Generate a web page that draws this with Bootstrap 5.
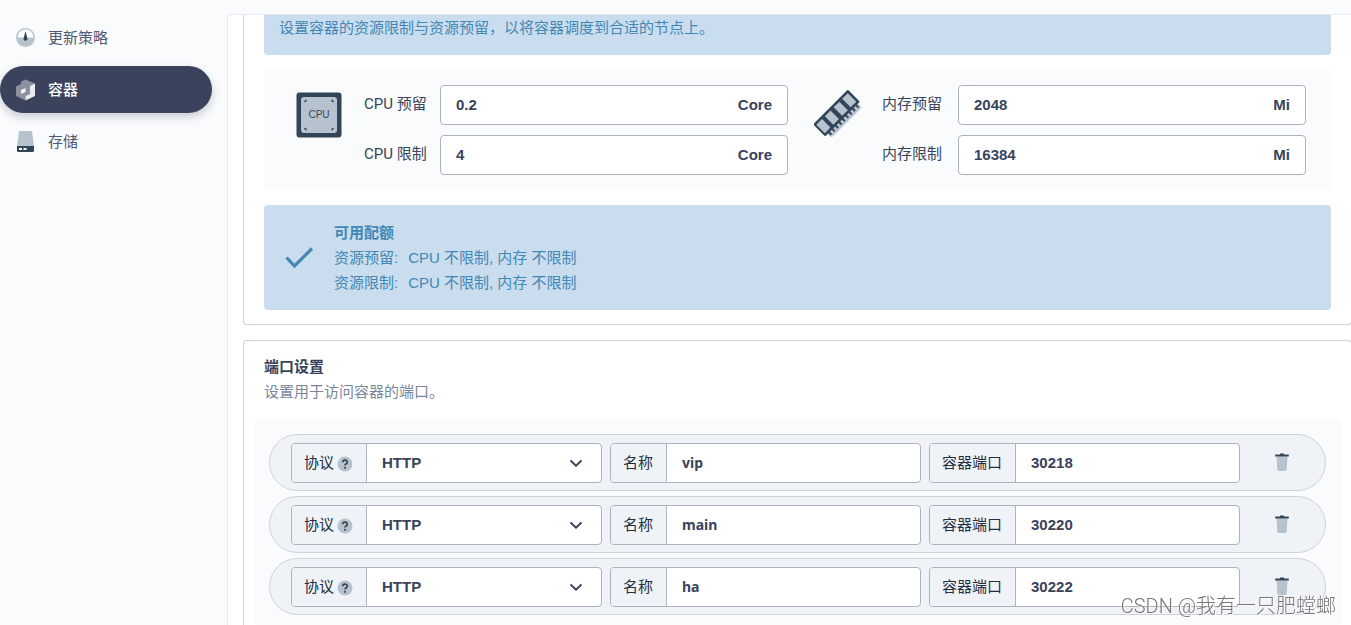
<!DOCTYPE html>
<html lang="zh-CN">
<head>
<meta charset="utf-8">
<meta name="viewport" content="width=device-width, initial-scale=1">
<title>容器设置</title>
<link href="https://cdn.jsdelivr.net/npm/bootstrap@5.3.0/dist/css/bootstrap.min.css" rel="stylesheet">
<style>
  :root {
    --ink: #39435c;
    --line: #abb4be;
    --card-line: #ccd3db;
    --pale: #f9fbfd;
    --tint: #eff3f8;
    --info-bg: #c9ddee;
    --info: #4387b5;
  }
  body {
    font-family: "Liberation Sans", "Noto Sans CJK SC", sans-serif;
    font-size: 15px;
    line-height: 25px;
    color: var(--ink);
    background: var(--pale);
  }
  .shell { height: 100vh; padding-top: 14px; }
  .side { width: 227px; padding-right: 15px; gap: 5px; }
  .side .nav-link {
    height: 47px;
    padding: 0 16px;
    gap: 12px;
    color: #4d5a75;
    border-radius: 24px;
  }
  .side .nav-link svg { width: 20px; height: 22px; }
  .side .nav-link.active {
    background: #3a435b;
    color: #fff;
    font-weight: 500;
    box-shadow: 0 4px 8px rgba(54, 67, 92, .25);
  }
  .pane {
    background: #fff;
    border: solid #e3e9ef;
    border-width: 1px 0 0 1px;
    border-radius: 4px 0 0 0;
    padding-left: 15px;
    gap: 15px;
    overflow-x: hidden;
    overflow-y: auto;
  }
  .box {
    border: 1px solid var(--card-line);
    border-radius: 4px;
    padding: 0 20px;
    margin-right: -1px;
  }
  .box-upper { border-top: 0; border-top-left-radius: 0; border-top-right-radius: 0; padding-bottom: 14px; gap: 15px; }
  .box-lower { border-bottom: 0; border-bottom-left-radius: 0; border-bottom-right-radius: 0; padding-top: 13px; }
  .info { background: var(--info-bg); color: var(--info); border-radius: 4px; }
  .info-intro { border-top-left-radius: 0; border-top-right-radius: 0; padding: 0 15px 15px; }
  .info-quota { padding: 15px 20px; gap: 20px; }
  .info-quota svg { width: 30px; height: 30px; }
  .info-quota dl { grid-template-columns: auto 1fr; column-gap: 10px; }
  .limits { background: var(--pale); border-radius: 4px; padding: 15px 25px 15px 32px; gap: 26px; }
  .limit-half { flex: 1 1 0; min-width: 0; gap: 20px; }
  .limit-half > svg { width: 48px; height: 60px; }
  .limit-rows { gap: 10px; }
  .limit-rows label { width: 76px; line-height: 38px; height: 40px; font-family: Roboto, "Noto Sans CJK SC", sans-serif; }
  .field {
    height: 40px;
    background: #fff;
    border: 1px solid var(--line);
    border-radius: 4px;
    font-weight: 700;
  }
  .field input, .field select {
    min-width: 0;
    border: 0;
    outline: 0;
    padding: 0 15px 2px;
    background: transparent;
    color: var(--ink);
    font-weight: 700;
    appearance: none;
  }
  .field:focus-within { border-color: #55bc8a; }
  .unit { padding: 0 15px 2px 0; }
  .hint { color: #79879c; }
  .ports { background: var(--pale); border-radius: 4px; margin: 15px -10px 0; padding: 15px; gap: 5px; }
  .port { background: var(--tint); border: 1px solid var(--card-line); border-radius: 29px; padding: 8px 0 7px 21px; }
  .port-fields { gap: 8px; }
  .port .field { flex: 1 1 0; min-width: 0; }
  .tag {
    background: var(--tint);
    border-right: 1px solid var(--line);
    border-radius: 3px 0 0 3px;
    padding: 0 13px 2px 12px;
    gap: 3px;
    font-weight: 400;
    color: #242e42;
  }
  .tag svg { width: 16px; height: 16px; margin-top: 3px; }
  .name-input { font-family: "Noto Sans", "Noto Sans CJK SC", sans-serif; font-size: 14px; }
  .chevron { right: 18px; width: 14px; height: 14px; pointer-events: none; }
  .trash { width: 85px; border: 0; background: none; padding: 0 2px 6px 0; }
  .trash svg { width: 16px; height: 20px; }
  .signature {
    right: 15px;
    bottom: 4px;
    font: 300 20px/30px Roboto, "Noto Sans CJK SC", sans-serif;
    color: #777;
    text-shadow: 1px 1px 0 #fff;
    pointer-events: none;
  }
</style>
</head>
<body>
<svg class="d-none" aria-hidden="true">
  <symbol id="i-help" viewBox="0 0 16 16">
    <circle cx="8" cy="8" r="7.5" fill="#b6c2cd"/>
    <path d="M5.7 6.3C5.8 3.5 10.3 3.5 10.3 6.2C10.3 7.8 8 7.8 8 9.6" fill="none" stroke="#324558" stroke-width="1.7"/>
    <rect x="7.1" y="10.9" width="1.8" height="1.8" fill="#324558"/>
  </symbol>
  <symbol id="i-trash" viewBox="0 0 16 20">
    <path d="M2.5 4.5h11l-.8 13a1.5 1.5 0 0 1-1.5 1.4H4.8a1.5 1.5 0 0 1-1.5-1.4z" fill="#b6c2cd"/>
    <path d="M1.2 2.500H6V1.500h4v1h4.800v2H1.200z" fill="#324558"/>
  </symbol>
  <symbol id="i-chevron" viewBox="0 0 14 14">
    <path d="M1.5 4.500L7 9.800l5.500-5.300" fill="none" stroke="#36435c" stroke-width="1.900"/>
  </symbol>
</svg>

<div class="shell d-flex">
  <nav class="side nav flex-column flex-nowrap flex-shrink-0" aria-label="设置">
    <a class="nav-link d-flex align-items-center" href="#strategy">
      <svg viewBox="0 0 20 22" aria-hidden="true">
        <circle cx="9.500" cy="10.500" r="9.500" fill="#b6c2cd"/>
        <path d="M1.500 10.500a8 8 0 0 1 16 0z" fill="#fff"/>
        <path d="M9.500 4l1.900 7.200a2 2 0 1 1-3.800 0z" fill="#324558"/>
      </svg>更新策略</a>
    <a class="nav-link active d-flex align-items-center" href="#container" aria-current="page">
      <svg viewBox="0 0 20 22" aria-hidden="true">
        <path d="M9.500 .5L19 4.500 14 7.500v7.500l-4.500 2v4.500L0 17V7.500l5-2.500V2.500z" fill="#fff" opacity=".42"/>
        <path d="M14 7l5-2.500v12.500l-9.500 4.500V17l4.500-2zM5 11l4.500-2v4L5 15z" fill="#fff" opacity=".9"/>
      </svg>容器</a>
    <a class="nav-link d-flex align-items-center" href="#storage">
      <svg viewBox="0 0 20 22" aria-hidden="true">
        <path d="M3 0h13l2 15.500H1z" fill="#b6c2cd"/>
        <path d="M1 15h17v4.500a1.500 1.500 0 0 1-1.500 1.500h-14A1.500 1.500 0 0 1 1 19.500z" fill="#324558"/>
        <path d="M3 17h3v2H3zM7.500 17h3v2h-3z" fill="#fff"/>
      </svg>存储</a>
  </nav>

  <main class="pane d-flex flex-column flex-grow-1">
    <section class="box box-upper d-flex flex-column flex-shrink-0" id="container">
      <div class="info info-intro">设置容器的资源限制与资源预留，以将容器调度到合适的节点上。</div>

      <div class="limits d-flex">
        <div class="limit-half d-flex">
          <svg class="flex-shrink-0" viewBox="0 0 48 60" aria-hidden="true">
            <rect x=".5" y="7.500" width="45" height="45" rx="3" fill="#324558"/>
            <rect x="5" y="12" width="36" height="36" rx="3" fill="#b6c2cd"/>
            <path d="M8.500 17l2-2M37.500 17l-2-2M8.500 43l2 2M37.500 43l-2 2" stroke="#324558" stroke-width="1.500"/>
            <text x="23" y="33" text-anchor="middle" font-family="Liberation Sans, sans-serif" font-size="10" fill="#324558">CPU</text>
          </svg>
          <div class="limit-rows d-flex flex-column flex-grow-1">
            <div class="d-flex">
              <label for="cpu-request">CPU 预留</label>
              <div class="field d-flex align-items-center flex-grow-1"><input class="flex-grow-1" id="cpu-request" type="text" value="0.2"><span class="unit">Core</span></div>
            </div>
            <div class="d-flex">
              <label for="cpu-limit">CPU 限制</label>
              <div class="field d-flex align-items-center flex-grow-1"><input class="flex-grow-1" id="cpu-limit" type="text" value="4"><span class="unit">Core</span></div>
            </div>
          </div>
        </div>
        <div class="limit-half d-flex">
          <svg class="flex-shrink-0" viewBox="0 0 48 60" aria-hidden="true">
            <g transform="translate(22.500 28) rotate(-45)">
              <rect x="-21" y="5" width="43" height="9" rx="2" fill="#b9c3d0"/>
              <path d="M-20 9.500h41" stroke="#324558" stroke-width="4.500" stroke-dasharray="2 2.800"/>
              <rect x="-24.500" y="-8.500" width="49" height="17" rx="1" fill="#324558"/>
              <path d="M-22.500-6h8v12h-8zM-10.500-6h8v12h-8zM2-6h8v12H2zM14-6h8v12h-8z" fill="#b6c2cd"/>
            </g>
          </svg>
          <div class="limit-rows d-flex flex-column flex-grow-1">
            <div class="d-flex">
              <label for="mem-request">内存预留</label>
              <div class="field d-flex align-items-center flex-grow-1"><input class="flex-grow-1" id="mem-request" type="text" value="2048"><span class="unit">Mi</span></div>
            </div>
            <div class="d-flex">
              <label for="mem-limit">内存限制</label>
              <div class="field d-flex align-items-center flex-grow-1"><input class="flex-grow-1" id="mem-limit" type="text" value="16384"><span class="unit">Mi</span></div>
            </div>
          </div>
        </div>
      </div>

      <div class="info info-quota d-flex align-items-center">
        <svg class="flex-shrink-0" viewBox="0 0 30 30" aria-hidden="true"><path d="M2.500 14.500l8 8.500L28 5.500" fill="none" stroke="#4387b5" stroke-width="3.200"/></svg>
        <div>
          <div class="fw-bold">可用配额</div>
          <dl class="d-grid mb-0">
            <dt class="fw-normal">资源预留:</dt><dd class="mb-0">CPU 不限制, 内存 不限制</dd>
            <dt class="fw-normal">资源限制:</dt><dd class="mb-0">CPU 不限制, 内存 不限制</dd>
          </dl>
        </div>
      </div>
    </section>

    <section class="box box-lower d-flex flex-column flex-grow-1">
      <div class="fw-bold">端口设置</div>
      <div class="hint">设置用于访问容器的端口。</div>
      <div class="ports d-flex flex-column flex-grow-1 pb-0">
        <div class="port d-flex">
          <div class="port-fields d-flex flex-grow-1">
            <div class="field d-flex position-relative">
              <label class="tag d-flex align-items-center flex-shrink-0" for="proto-1">协议<svg aria-hidden="true"><use href="#i-help"/></svg></label>
              <select class="flex-grow-1" id="proto-1"><option>HTTP</option><option>TCP</option><option>UDP</option></select>
              <svg class="chevron position-absolute top-50 translate-middle-y" aria-hidden="true"><use href="#i-chevron"/></svg>
            </div>
            <div class="field d-flex">
              <label class="tag d-flex align-items-center flex-shrink-0" for="name-1">名称</label>
              <input class="name-input flex-grow-1" id="name-1" type="text" value="vip">
            </div>
            <div class="field d-flex">
              <label class="tag d-flex align-items-center flex-shrink-0" for="port-1">容器端口</label>
              <input class="flex-grow-1" id="port-1" type="text" value="30218">
            </div>
          </div>
          <button class="trash flex-shrink-0" type="button" aria-label="删除"><svg aria-hidden="true"><use href="#i-trash"/></svg></button>
        </div>
        <div class="port d-flex">
          <div class="port-fields d-flex flex-grow-1">
            <div class="field d-flex position-relative">
              <label class="tag d-flex align-items-center flex-shrink-0" for="proto-2">协议<svg aria-hidden="true"><use href="#i-help"/></svg></label>
              <select class="flex-grow-1" id="proto-2"><option>HTTP</option><option>TCP</option><option>UDP</option></select>
              <svg class="chevron position-absolute top-50 translate-middle-y" aria-hidden="true"><use href="#i-chevron"/></svg>
            </div>
            <div class="field d-flex">
              <label class="tag d-flex align-items-center flex-shrink-0" for="name-2">名称</label>
              <input class="name-input flex-grow-1" id="name-2" type="text" value="main">
            </div>
            <div class="field d-flex">
              <label class="tag d-flex align-items-center flex-shrink-0" for="port-2">容器端口</label>
              <input class="flex-grow-1" id="port-2" type="text" value="30220">
            </div>
          </div>
          <button class="trash flex-shrink-0" type="button" aria-label="删除"><svg aria-hidden="true"><use href="#i-trash"/></svg></button>
        </div>
        <div class="port d-flex">
          <div class="port-fields d-flex flex-grow-1">
            <div class="field d-flex position-relative">
              <label class="tag d-flex align-items-center flex-shrink-0" for="proto-3">协议<svg aria-hidden="true"><use href="#i-help"/></svg></label>
              <select class="flex-grow-1" id="proto-3"><option>HTTP</option><option>TCP</option><option>UDP</option></select>
              <svg class="chevron position-absolute top-50 translate-middle-y" aria-hidden="true"><use href="#i-chevron"/></svg>
            </div>
            <div class="field d-flex">
              <label class="tag d-flex align-items-center flex-shrink-0" for="name-3">名称</label>
              <input class="name-input flex-grow-1" id="name-3" type="text" value="ha">
            </div>
            <div class="field d-flex">
              <label class="tag d-flex align-items-center flex-shrink-0" for="port-3">容器端口</label>
              <input class="flex-grow-1" id="port-3" type="text" value="30222">
            </div>
          </div>
          <button class="trash flex-shrink-0" type="button" aria-label="删除"><svg aria-hidden="true"><use href="#i-trash"/></svg></button>
        </div>
      </div>
    </section>
  </main>
</div>
<div class="signature position-fixed">CSDN @我有一只肥螳螂</div>
<script src="https://cdn.jsdelivr.net/npm/bootstrap@5.3.0/dist/js/bootstrap.bundle.min.js"></script>
</body>
</html>
